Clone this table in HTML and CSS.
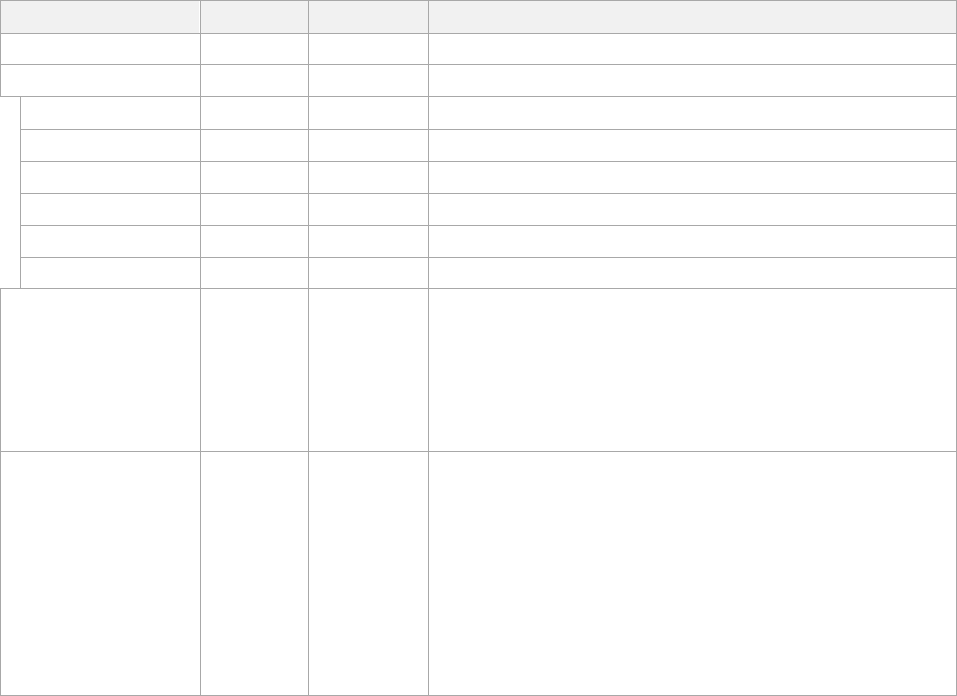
FILE: index.html
```html
<!DOCTYPE html>
<html>
<head>
<meta charset="utf-8">
<link rel="stylesheet" href="styles.css">
</head>
<body>
<div class="sheet">
  <div class="row head r33">
    <div class="cell first"></div><div class="cell"></div><div class="cell"></div><div class="cell"></div>
  </div>
  <div class="row r31">
    <div class="cell"></div><div class="cell"></div><div class="cell"></div><div class="cell"></div>
  </div>
  <div class="row r32">
    <div class="cell"></div><div class="cell"></div><div class="cell"></div><div class="cell"></div>
  </div>
  <div class="group">
    <div class="row sub r33">
      <div class="cell"></div><div class="cell"></div><div class="cell"></div><div class="cell"></div>
    </div>
    <div class="row sub r32">
      <div class="cell"></div><div class="cell"></div><div class="cell"></div><div class="cell"></div>
    </div>
    <div class="row sub r32">
      <div class="cell"></div><div class="cell"></div><div class="cell"></div><div class="cell"></div>
    </div>
    <div class="row sub r32">
      <div class="cell"></div><div class="cell"></div><div class="cell"></div><div class="cell"></div>
    </div>
    <div class="row sub r32">
      <div class="cell"></div><div class="cell"></div><div class="cell"></div><div class="cell"></div>
    </div>
    <div class="row sub last r30">
      <div class="cell"></div><div class="cell"></div><div class="cell"></div><div class="cell"></div>
    </div>
  </div>
  <div class="row r163">
    <div class="cell"></div><div class="cell"></div><div class="cell"></div><div class="cell"></div>
  </div>
  <div class="row r244">
    <div class="cell"></div><div class="cell"></div><div class="cell"></div><div class="cell"></div>
  </div>
</div>
</body>
</html>
```

FILE: styles.css
```css
html, body {
  margin: 0;
  padding: 0;
  background: #ffffff;
  font-family: "Liberation Sans", Arial, sans-serif;
}

.sheet {
  width: 957px;
  border-top: 1px solid #a8a8a8;
}

.row {
  display: grid;
  grid-template-columns: 200px 108px 120px 528px;
  border-left: 1px solid #a8a8a8;
  border-bottom: 1px solid #a8a8a8;
  box-sizing: border-box;
}

.cell {
  border-right: 1px solid #a8a8a8;
}

.head .cell {
  background: #f1f1f1;
}

.head .cell.first {
  box-shadow: inset -1px 0 0 #ffffff;
}

.group {
  padding-left: 20px;
  border-bottom: 1px solid #a8a8a8;
}

.row.sub {
  grid-template-columns: 180px 108px 120px 528px;
}

.row.sub.last {
  border-bottom: none;
}

.r30 { height: 30px; }
.r31 { height: 31px; }
.r32 { height: 32px; }
.r33 { height: 33px; }
.r163 { height: 163px; }
.r244 { height: 244px; }
```
